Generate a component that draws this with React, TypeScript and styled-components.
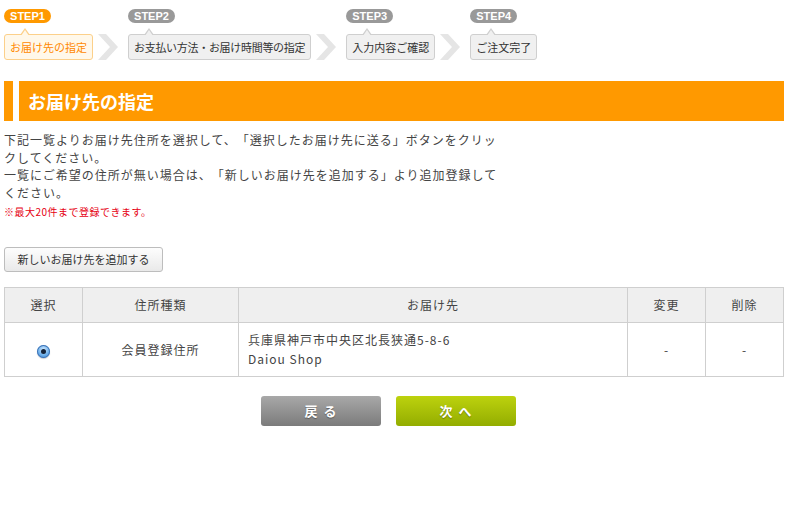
import React from "react";
import styled, { createGlobalStyle } from "styled-components";

const GlobalStyle = createGlobalStyle`
  html, body {
    margin: 0;
    padding: 0;
    background: #fff;
  }
  body {
    font-family: "Liberation Sans", "Noto Sans CJK JP", sans-serif;
    color: #333;
    text-spacing-trim: space-all;
  }
`;

const Page = styled.div`
  width: 780px;
  padding: 9px 0 0 4px;
  font-family: "Liberation Sans", "Noto Sans CJK JP", sans-serif;
`;

const StepRow = styled.div`
  display: flex;
  align-items: flex-end;
`;

const Step = styled.div`
  display: flex;
  flex-direction: column;
  align-items: flex-start;
  gap: 11px;
`;

const Badge = styled.div<{ $active?: boolean }>`
  height: 14px;
  width: 47px;
  border-radius: 7px;
  background: ${(p) => (p.$active ? "#ff9900" : "#999")};
  color: #fff;
  font-family: "Liberation Sans", Arial, sans-serif;
  font-weight: bold;
  font-size: 11px;
  line-height: 14px;
  text-align: center;
`;

const StepBox = styled.div<{ $active?: boolean; $tight?: boolean }>`
  position: relative;
  height: 24px;
  padding: 0 5px;
  border: 1px solid ${(p) => (p.$active ? "#fcd08a" : "#cfcfcf")};
  border-radius: 3px;
  background: ${(p) => (p.$active ? "#fff8ea" : "#f0f0f0")};
  color: ${(p) => (p.$active ? "#ff8800" : "#333")};
  font-family: "Noto Sans CJK JP", sans-serif;
  font-size: 11px;
  letter-spacing: ${(p) => (p.$tight ? "-0.3px" : "0")};
  line-height: 24px;
  white-space: nowrap;

  &::before,
  &::after {
    content: "";
    position: absolute;
    left: 15px;
    width: 0;
    height: 0;
    border-left: 5px solid transparent;
    border-right: 5px solid transparent;
  }
  &::before {
    top: -7px;
    border-bottom: 7px solid ${(p) => (p.$active ? "#fcd08a" : "#cfcfcf")};
  }
  &::after {
    top: -5px;
    left: 16px;
    border-left-width: 4px;
    border-right-width: 4px;
    border-bottom: 6px solid ${(p) => (p.$active ? "#fff8ea" : "#f0f0f0")};
  }
`;

const Chevron = styled.div`
  width: 35px;
  height: 26px;
  display: flex;
  align-items: center;
  justify-content: center;
  padding-right: 6px;
  box-sizing: border-box;
`;

const Heading = styled.h2`
  margin: 21px 0 0;
  height: 40px;
  background: #ff9900;
  border-left: 9px solid #ff9900;
  display: flex;
  align-items: center;
  color: #fff;
  font-family: "Noto Sans CJK JP", sans-serif;
  font-size: 18px;
  font-weight: bold;
  position: relative;
  padding-left: 15px;

  &::before {
    content: "";
    position: absolute;
    left: 0;
    top: 0;
    width: 6px;
    height: 100%;
    background: #fff;
  }
`;

const Intro = styled.div`
  width: 502px;
  margin-top: 10px;
  font-family: "Noto Sans CJK JP", sans-serif;
  font-size: 12px;
  line-height: 17.7px;
  letter-spacing: 1px;
  color: #444;

  p {
    margin: 0;
  }
`;

const Note = styled.p`
  margin: 3px 0 0 !important;
  color: #e60012;
  font-size: 10px;
  line-height: 14px;
  letter-spacing: 0.5px;
`;

const AddButton = styled.button`
  margin-top: 28px;
  height: 25px;
  width: 159px;
  padding: 0;
  border: 1px solid #bdbdbd;
  border-radius: 3px;
  background: linear-gradient(#fdfdfd, #e9e9e9);
  font-family: "Noto Sans CJK JP", sans-serif;
  font-size: 11px;
  color: #333;
  cursor: pointer;
`;

const Table = styled.table`
  margin-top: 15px;
  width: 780px;
  table-layout: fixed;
  border-collapse: collapse;
  font-family: "Noto Sans CJK JP", sans-serif;
  font-size: 12px;
  color: #444;
  letter-spacing: 1px;
`;

const Col = styled.col<{ $w?: number }>`
  width: ${(p) => (p.$w ? `${p.$w}px` : "auto")};
`;

const Th = styled.th`
  height: 34px;
  padding: 0;
  border: 1px solid #cfcfcf;
  background: #efefef;
  font-weight: normal;
  text-align: center;
`;

const Td = styled.td<{ $left?: boolean }>`
  height: 53px;
  padding: 0 ${(p) => (p.$left ? "9px" : "0")};
  border: 1px solid #cfcfcf;
  text-align: ${(p) => (p.$left ? "left" : "center")};
  line-height: 19px;
`;

const Radio = styled.span`
  display: inline-block;
  width: 13px;
  height: 13px;
  border-radius: 50%;
  background: radial-gradient(circle at 50% 35%, #cfe8ff 0%, #6aaeea 55%, #2f6fc0 100%);
  box-shadow: inset 0 0 0 1px #3f73b5, 0 1px 1px rgba(0, 0, 0, 0.2);
  position: relative;
  vertical-align: middle;

  &::after {
    content: "";
    position: absolute;
    left: 4px;
    top: 4px;
    width: 5px;
    height: 5px;
    border-radius: 50%;
    background: #142238;
  }
`;

const Actions = styled.div`
  display: flex;
  justify-content: center;
  gap: 15px;
  margin-top: 19px;
  padding-right: 12px;
`;

const NavButton = styled.button<{ $primary?: boolean }>`
  width: 120px;
  height: 30px;
  border: none;
  border-radius: 3px;
  background: ${(p) =>
    p.$primary
      ? "linear-gradient(#bdd20e, #93ad00)"
      : "linear-gradient(#a8a8a8, #7b7b7b)"};
  color: #fff;
  font-family: "Noto Sans CJK JP", sans-serif;
  font-size: 13px;
  font-weight: bold;
  letter-spacing: 6px;
  text-indent: 6px;
  text-shadow: 0 1px 1px rgba(0, 0, 0, 0.35);
  cursor: pointer;
`;

const ChevronIcon = () => (
  <svg width="20" height="26" viewBox="0 0 20 26">
    <polygon points="0,0 8,0 20,13 8,26 0,26 12,13" fill="#e5e5e5" />
  </svg>
);

const steps = [
  { label: "STEP1", text: "お届け先の指定" },
  { label: "STEP2", text: "お支払い方法・お届け時間等の指定" },
  { label: "STEP3", text: "入力内容ご確認" },
  { label: "STEP4", text: "ご注文完了" },
];

const App = () => {
  return (
    <>
      <GlobalStyle />
      <Page>
        <StepRow>
          {steps.map((s, i) => (
            <React.Fragment key={s.label}>
              {i > 0 && (
                <Chevron>
                  <ChevronIcon />
                </Chevron>
              )}
              <Step>
                <Badge $active={i === 0}>{s.label}</Badge>
                <StepBox $active={i === 0} $tight={s.text.length > 10}>
                  {s.text}
                </StepBox>
              </Step>
            </React.Fragment>
          ))}
        </StepRow>

        <Heading>お届け先の指定</Heading>

        <Intro>
          <p>
            下記一覧よりお届け先住所を選択して、「選択したお届け先に送る」ボタンをクリックしてください。
          </p>
          <p>
            一覧にご希望の住所が無い場合は、「新しいお届け先を追加する」より追加登録してください。
          </p>
          <Note>※最大20件まで登録できます。</Note>
        </Intro>

        <AddButton>新しいお届け先を追加する</AddButton>

        <Table>
          <colgroup>
            <Col $w={78} />
            <Col $w={156} />
            <Col />
            <Col $w={78} />
            <Col $w={78} />
          </colgroup>
          <thead>
            <tr>
              <Th>選択</Th>
              <Th>住所種類</Th>
              <Th>お届け先</Th>
              <Th>変更</Th>
              <Th>削除</Th>
            </tr>
          </thead>
          <tbody>
            <tr>
              <Td>
                <Radio />
              </Td>
              <Td>会員登録住所</Td>
              <Td $left>
                兵庫県神戸市中央区北長狭通5-8-6
                <br />
                Daiou Shop
              </Td>
              <Td>-</Td>
              <Td>-</Td>
            </tr>
          </tbody>
        </Table>

        <Actions>
          <NavButton>戻る</NavButton>
          <NavButton $primary>次へ</NavButton>
        </Actions>
      </Page>
    </>
  );
};

export default App;
